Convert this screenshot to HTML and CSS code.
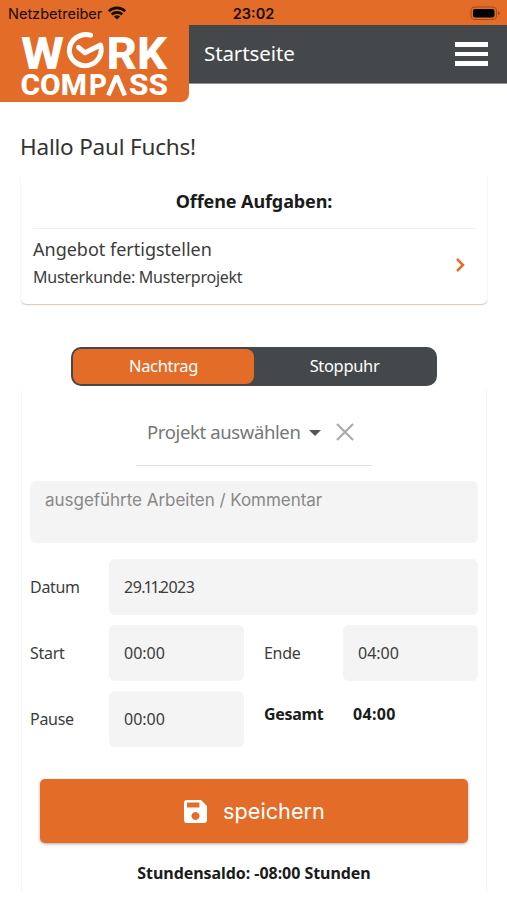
FILE: index.html
```html
<!DOCTYPE html>
<html lang="de">
<head>
<meta charset="utf-8">
<title>Work Compass</title>
<link rel="stylesheet" href="styles.css">
</head>
<body>
<div class="statusbar">
  <div class="carrier"><span>Netzbetreiber</span>
    <svg width="18" height="14" viewBox="0 0 18 14" fill="none" stroke="#140a04" stroke-width="2.6"><path d="M.8 5.2a11.8 11.8 0 0 1 16.4 0M3.7 8.5a7.7 7.7 0 0 1 10.6 0"/><path d="M9 13.5 5.9 10.6a4.5 4.5 0 0 1 6.2 0z" fill="#140a04" stroke="none"/></svg>
  </div>
  <div class="clock">23:02</div>
  <svg class="battery" width="31" height="15" viewBox="0 0 31 15"><rect x="1" y="1" width="25.5" height="12.5" rx="3.8" fill="none" stroke="#a44b1c" stroke-width="1.1"/><rect x="3" y="3" width="21.5" height="8.5" rx="2" fill="#000"/><path d="M28 5v4.5q1.7-.7 1.7-2.25T28 5z" fill="#a44b1c"/></svg>
</div>
<header class="header">
  <div class="logo">
    <svg width="189" height="77" viewBox="0 25 189 77">
      <g class="logo-text">
        <text x="21" y="69" font-size="43.5" textLength="43" lengthAdjust="spacingAndGlyphs">W</text>
        <text x="106.5" y="69" font-size="43.5" textLength="60.5" lengthAdjust="spacingAndGlyphs">RK</text>
        <text x="20.5" y="95" font-size="29" textLength="66.5" lengthAdjust="spacingAndGlyphs">COM</text>
        <text x="89" y="95" font-size="29" textLength="18" lengthAdjust="spacingAndGlyphs">P</text>
        <text x="129" y="95" font-size="29" textLength="39" lengthAdjust="spacingAndGlyphs">SS</text>
      </g>
      <path d="M108.3 95.3 116.6 76 124.9 95.3" fill="none" stroke="#fff" stroke-width="4.6" stroke-linejoin="bevel"/>
      <path d="M90.5 35.2C80 32 69.3 40 69.3 51.5A16 16 0 1 0 100.5 45L85 52.8 78.5 47.3" fill="none" stroke="#fff" stroke-width="5" stroke-linecap="round" stroke-linejoin="round"/>
    </svg>
  </div>
  <div class="topbar"><h1>Startseite</h1><div class="burger"><i></i><i></i><i></i></div></div>
</header>
<main>
  <h2 class="greeting">Hallo Paul Fuchs!</h2>
  <section class="tasks">
    <h3>Offene Aufgaben:</h3>
    <div class="task">
      <div><div class="task-name">Angebot fertigstellen</div><div class="task-project">Musterkunde: Musterprojekt</div></div>
      <svg width="12" height="16" viewBox="0 0 12 16" fill="none" stroke="#e46c29" stroke-width="2.5"><path d="M2 2l6 6-6 6"/></svg>
    </div>
  </section>
  <div class="toggle"><div class="tab active">Nachtrag</div><div class="tab">Stoppuhr</div></div>
  <section class="entry">
    <div class="select"><span>Projekt auswählen</span>
      <svg class="caret" width="12" height="6" viewBox="0 0 12 6"><path d="M0 0h12L6 6z" fill="#555"/></svg>
      <svg width="18" height="18" viewBox="0 0 18 18" stroke="#aaa" stroke-width="2.2"><path d="M1 1l16 16M17 1 1 17"/></svg>
    </div>
    <div class="comment">ausgeführte Arbeiten / Kommentar</div>
    <div class="fields">
      <label>Datum</label><div class="input wide">29<span class="tight">.11.</span>2023</div>
      <label>Start</label><div class="input">00:00</div><label class="second">Ende</label><div class="input">04:00</div>
      <label>Pause</label><div class="input">00:00</div><div class="second total">Gesamt</div><div class="total sum">04:00</div>
    </div>
    <div class="save">
      <svg width="23" height="23" viewBox="0 0 23 23"><path fill="#fff" fill-rule="evenodd" d="M3 0H17L23 6V20Q23 23 20 23H3Q0 23 0 20V3Q0 0 3 0ZM3 2.6V7.6H15.4V2.6ZM11.5 12a4 4 0 1 0 .01 0Z"/></svg>
      <span>speichern</span>
    </div>
    <div class="balance">Stundensaldo: -08:00 Stunden</div>
  </section>
</main>
</body>
</html>
```
FILE: styles.css
```css
* { box-sizing: border-box; }
body { margin: 0; height: 900px; overflow: hidden; background: #fff; color: #3c3c3c; font: 16px "Noto Sans", sans-serif; }
svg { display: block; flex: none; }
h1, h2, h3 { margin: 0; font-weight: 400; }
.statusbar { height: 25px; background: #e46c29; display: grid; grid-template-columns: 1fr auto 1fr; align-items: center; padding: 2px 6px 0 8px; color: #140a04; font: 14.5px/23px Inter, sans-serif; }
.carrier { display: flex; align-items: center; gap: 6px; }
.carrier svg { margin-top: -2px; }
.clock { font-weight: 600; margin-left: -2px; }
.battery { justify-self: end; }
.header { display: flex; height: 77px; align-items: flex-start; }
.logo { width: 189px; height: 77px; background: #e46c29; border-radius: 0 0 8px 0; overflow: hidden; }
.logo-text { font-family: Roboto, sans-serif; font-weight: 800; fill: #fff; }
.topbar { flex: 1; height: 59px; background: #44484a; border-bottom: 1px solid #8f9192; display: flex; align-items: center; justify-content: space-between; padding: 0 19px 3px 15px; color: #fff; }
.topbar h1 { font-size: 20.5px; letter-spacing: -.1px; }
.burger { display: flex; flex-direction: column; gap: 4.7px; width: 33px; margin-top: 3px; }
.burger i { height: 4.6px; background: #fff; }
main { padding: 29px 20px 0 21px; }
.greeting { font-size: 22.5px; line-height: 31px; letter-spacing: -.2px; color: #333; margin-left: -1px; }
.tasks { margin-top: 14px; height: 128px; padding: 0 12px; border-radius: 0 0 5px 5px; box-shadow: 0 1px 1px #dccabf, 0 1px 2px #eee; }
.tasks h3 { height: 53px; line-height: 51px; border-bottom: 1px solid #f1f1f1; text-align: center; color: #1b1b1b; font-size: 18px; letter-spacing: -.1px; font-weight: 700; }
.task { display: flex; justify-content: space-between; align-items: center; height: 72px; padding-right: 8px; }
.task > div { margin-top: -4px; }
.task-name { font-size: 18px; line-height: 29px; }
.task-project { line-height: 27px; letter-spacing: -.25px; }
.toggle { margin: 43px 50px 0; height: 39px; padding: 2px; border-radius: 10px; background: #44484a; display: flex; color: #fff; }
.tab { flex: 1; line-height: 33px; text-align: center; font-size: 16.5px; letter-spacing: -.35px; border-radius: 8px; }
.tab.active { background: #e46c29; }
.entry { margin-top: 4px; height: 502px; padding: 8px 8px 0; border-left: 1px solid #f5f5f5; border-right: 1px solid #f5f5f5; }
.select { width: 236px; height: 68px; margin-left: 106px; padding-left: 11px; display: flex; align-items: center; border-bottom: 1px solid #e4e4e4; font-size: 18.5px; letter-spacing: -.38px; color: #777; white-space: nowrap; }
.caret { margin: 2px 15px 0 9px; }
.comment { margin-top: 15px; height: 62px; padding: 9px 15px; border-radius: 6px; background: #f4f4f4; color: #888; font: 17px/21px Inter, sans-serif; letter-spacing: -.03px; }
.fields { margin-top: 16px; display: grid; grid-template-columns: 79px 135px 99px 135px; grid-auto-rows: 56px; row-gap: 10px; align-items: center; }
.fields label { letter-spacing: -.3px; }
.input { height: 56px; line-height: 56px; padding-left: 15px; border-radius: 6px; background: #f4f4f4; }
.wide { grid-column: span 3; letter-spacing: -.5px; }
.tight { letter-spacing: -2.1px; }
.second { padding-left: 20px; }
.total { font-weight: 700; color: #1b1b1b; letter-spacing: -.3px; padding-bottom: 11px; }
.sum { padding-left: 10px; letter-spacing: .3px; }
.save { margin: 32px 10px 0; height: 64px; display: flex; align-items: center; justify-content: center; gap: 16px; border-radius: 5px; background: #e46c29; box-shadow: 0 1px 3px #aaa; color: #fff; font: 21.7px Inter, sans-serif; padding-left: 1px; }
.balance { margin-top: 19px; line-height: 22px; text-align: center; color: #1b1b1b; font-weight: 700; letter-spacing: -.05px; }
```
